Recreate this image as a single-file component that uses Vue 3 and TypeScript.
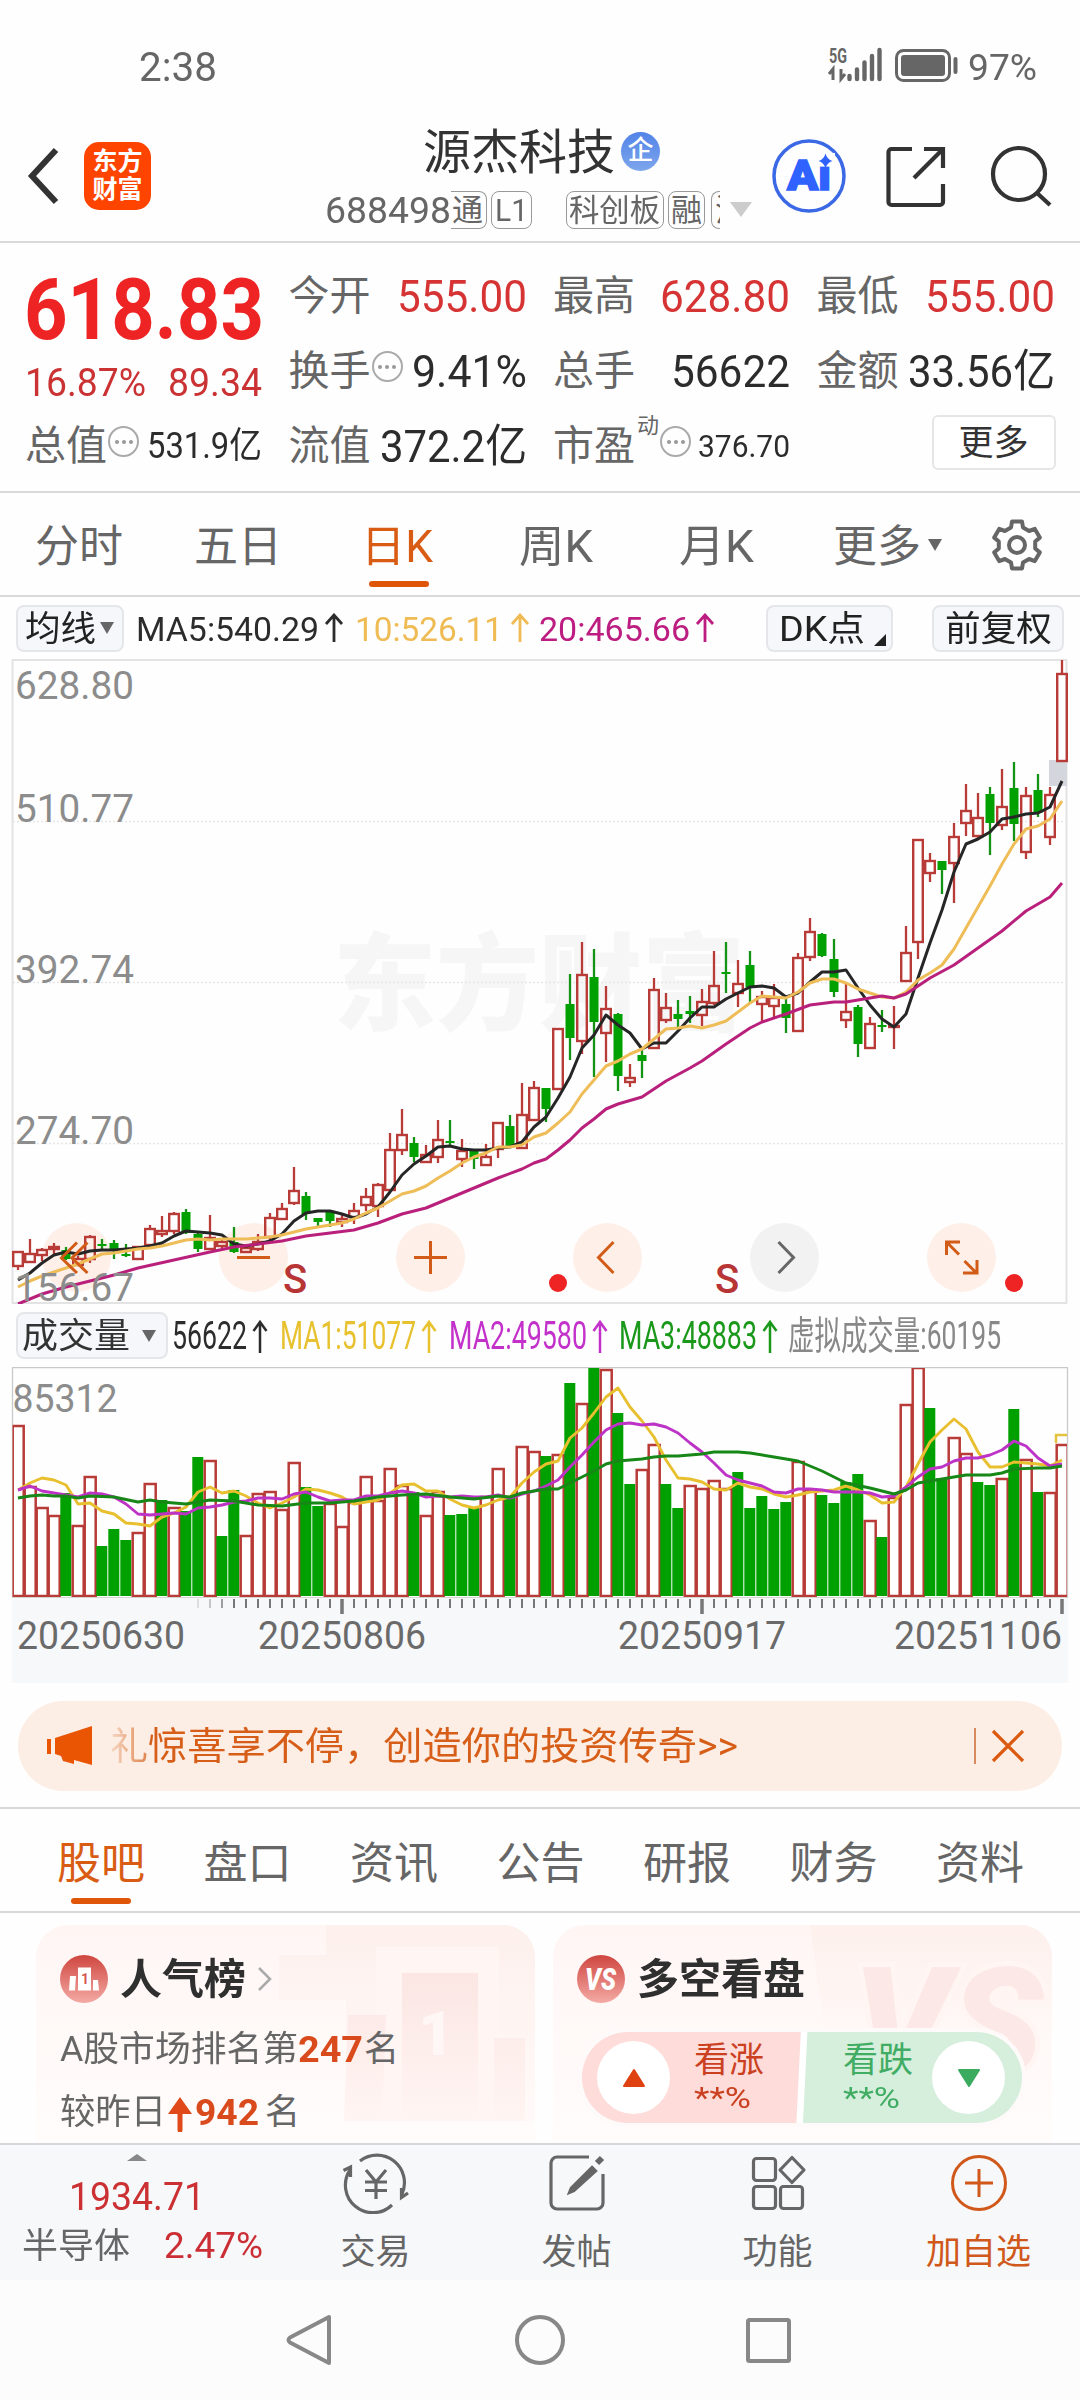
<script setup lang="ts">
import type { Directive } from 'vue'

// Condenses or widens a label so that it takes up exactly the given width.
const fitText = (el: HTMLElement, width: number) => {
  el.style.transform = ''
  el.style.marginRight = '0px'
  const natural = el.getBoundingClientRect().width
  if (!natural) return
  el.style.transformOrigin = 'left center'
  el.style.transform = `scaleX(${width / natural})`
  el.style.marginRight = `${width - natural}px`
}
const vFit: Directive<HTMLElement, number> = {
  mounted: (el, b) => fitText(el, b.value),
  updated: (el, b) => fitText(el, b.value),
}

type Candle = [up: 0 | 1, top: number, bottom: number, high: number, low: number]

const candles: Candle[] = [
  [1, 592, 606, 592, 610], [1, 594, 602, 579, 602], [1, 590, 595, 588, 601], [1, 587, 589, 583, 594],
  [0, 590, 599, 587, 600], [1, 599, 605, 596, 605], [1, 577, 599, 575, 603], [0, 584, 585, 579, 589],
  [0, 583, 589, 580, 599], [0, 594, 595, 584, 597], [1, 587, 599, 586, 599], [1, 569, 585, 565, 586],
  [1, 571, 574, 556, 577], [1, 554, 571, 552, 574], [0, 552, 573, 549, 574], [0, 574, 589, 573, 592],
  [1, 578, 589, 555, 589], [1, 582, 586, 578, 588], [0, 582, 592, 567, 593], [1, 588, 592, 587, 593],
  [1, 582, 589, 574, 591], [1, 558, 577, 553, 580], [1, 549, 559, 543, 560], [1, 531, 543, 507, 545],
  [0, 536, 554, 532, 560], [0, 558, 562, 558, 566], [0, 552, 561, 550, 567], [1, 559, 562, 555, 567],
  [1, 551, 557, 543, 564], [1, 537, 545, 528, 551], [1, 525, 546, 523, 557], [1, 490, 530, 473, 530],
  [1, 475, 490, 449, 495], [0, 483, 497, 477, 502], [1, 495, 502, 485, 502], [1, 480, 497, 460, 503],
  [0, 481, 483, 460, 486], [1, 491, 499, 479, 507], [0, 489, 499, 489, 509], [1, 497, 505, 484, 506],
  [1, 463, 489, 463, 498], [0, 466, 487, 455, 487], [1, 455, 488, 423, 488], [1, 428, 460, 421, 460],
  [0, 428, 449, 428, 462], [1, 369, 429, 369, 430], [0, 344, 378, 314, 400], [1, 315, 381, 282, 394],
  [0, 317, 362, 289, 417], [1, 349, 373, 326, 402], [0, 354, 416, 353, 431], [1, 418, 422, 404, 427],
  [0, 395, 401, 390, 418], [1, 330, 388, 318, 389], [1, 348, 360, 333, 363], [0, 354, 359, 340, 367],
  [0, 351, 354, 336, 363], [1, 342, 355, 329, 366], [1, 326, 343, 291, 345], [0, 312, 314, 282, 333],
  [1, 324, 333, 300, 347], [0, 305, 327, 291, 344], [1, 337, 344, 331, 361], [1, 338, 346, 324, 358],
  [0, 344, 358, 337, 373], [1, 298, 371, 293, 371], [1, 272, 297, 258, 301], [0, 274, 296, 273, 297],
  [0, 299, 332, 279, 337], [1, 352, 360, 323, 368], [0, 347, 384, 345, 397], [1, 364, 388, 357, 388],
  [0, 365, 366, 350, 372], [1, 366, 367, 346, 389], [1, 293, 321, 266, 321], [1, 180, 282, 180, 299],
  [1, 201, 213, 193, 222], [0, 201, 210, 201, 234], [1, 177, 203, 163, 243], [1, 151, 163, 124, 176],
  [1, 158, 176, 133, 178], [0, 134, 163, 127, 195], [1, 147, 165, 109, 170], [0, 128, 164, 102, 181],
  [1, 136, 192, 127, 199], [0, 130, 153, 114, 157], [1, 135, 177, 127, 185], [1, 14, 101, 0, 101],
]

const ma5 = [620, 613, 603, 595, 592, 594, 591, 590, 590, 589, 588, 586, 583, 576, 571, 572, 573, 575, 584, 586, 584, 581,
  574, 561, 553, 551, 551, 554, 558, 554, 547, 532, 515, 504, 496, 487, 486, 489, 490, 490, 488, 487, 482, 467, 457, 438,
  417, 388, 375, 355, 365, 373, 389, 383, 383, 371, 358, 347, 347, 339, 333, 327, 326, 328, 337, 333, 322, 312, 312, 310,
  328, 345, 359, 367, 354, 318, 283, 250, 212, 184, 179, 172, 159, 157, 154, 153, 147, 121]
const ma10 = [627, 621, 616, 612, 608, 604, 599, 594, 593, 591, 589, 588, 586, 583, 580, 579, 580, 579, 579, 579, 578, 577,
  575, 572, 569, 567, 565, 563, 559, 553, 548, 541, 534, 531, 526, 518, 511, 503, 497, 493, 487, 487, 485, 477, 473, 463,
  452, 434, 420, 406, 401, 394, 389, 379, 369, 368, 366, 368, 365, 361, 352, 343, 336, 337, 338, 332, 323, 319, 319, 323,
  329, 333, 337, 338, 332, 320, 313, 305, 289, 268, 247, 226, 204, 184, 169, 166, 159, 141]
const ma20: [number, number][] = [[0, 644], [2, 634], [4, 627], [8, 615], [10, 608], [13, 600], [16, 592], [18, 587], [20, 584],
  [22, 581], [24, 576], [26, 573], [28, 570], [30, 563], [32, 554], [34, 548], [36, 538], [38, 528], [40, 518], [42, 509],
  [43, 503], [44, 499], [45, 490], [46, 480], [47, 468], [48, 459], [49, 449], [50, 444], [52, 437], [54, 421], [56, 408],
  [57, 401], [59, 384], [61, 368], [62, 362], [64, 354], [66, 345], [68, 342], [69, 342], [70, 340], [72, 336], [73, 338],
  [74, 334], [76, 318], [78, 305], [80, 288], [82, 271], [84, 251], [86, 237], [87, 223]]

const volTops = [57, 118, 139, 147, 125, 157, 108, 178, 161, 172, 164, 115, 132, 139, 143, 89, 92, 168, 122, 167, 125, 123,
  141, 94, 119, 138, 135, 158, 134, 108, 132, 100, 117, 124, 147, 123, 147, 146, 139, 128, 100, 128, 78, 83, 88, 86, 15,
  35, 0, 1, 45, 116, 101, 76, 116, 140, 117, 120, 112, 120, 104, 140, 128, 141, 134, 93, 121, 127, 135, 114, 106, 152,
  169, 129, 36, -1, 40, 110, 69, 85, 114, 117, 110, 41, 91, 124, 124, 76]
const volDown = new Set([4, 7, 8, 9, 12, 14, 15, 17, 18, 24, 25, 33, 36, 37, 38, 41, 44, 46, 48, 50, 51, 54, 55, 60, 61, 62,
  63, 64, 67, 68, 69, 70, 72, 76, 77, 80, 81, 83, 85])
const volMa1 = [122, 115, 110, 112, 117, 136, 135, 143, 146, 155, 156, 158, 149, 145, 139, 124, 119, 125, 123, 128, 135, 140,
  135, 129, 121, 122, 125, 129, 136, 134, 132, 125, 117, 116, 123, 123, 131, 137, 140, 137, 132, 129, 115, 104, 96, 93,
  70, 60, 45, 29, 20, 39, 53, 69, 92, 110, 111, 114, 121, 122, 115, 119, 121, 126, 129, 127, 124, 123, 122, 118, 122,
  127, 135, 134, 119, 96, 74, 62, 51, 61, 84, 99, 99, 94, 95, 96, 98, 92]
const volMa2 = [122, 118, 123, 125, 127, 129, 125, 126, 129, 136, 146, 147, 146, 145, 146, 140, 139, 137, 134, 133, 130, 130,
  131, 126, 124, 129, 133, 132, 132, 128, 128, 125, 123, 125, 129, 128, 129, 128, 129, 129, 127, 130, 126, 123, 118, 112,
  99, 87, 74, 62, 56, 55, 57, 56, 59, 65, 75, 84, 95, 107, 112, 115, 118, 124, 125, 121, 121, 122, 124, 124, 124, 125,
  129, 128, 119, 109, 101, 99, 93, 90, 90, 87, 82, 73, 78, 90, 98, 96]
const volMa3: [number, number][] = [[0, 130], [1, 128], [2, 127], [3, 128], [4, 128], [5, 130], [6, 128], [8, 129], [10, 134],
  [11, 132], [12, 134], [14, 136], [16, 132], [18, 133], [20, 137], [22, 138], [24, 135], [26, 135], [28, 133], [30, 129],
  [32, 127], [34, 126], [36, 129], [38, 131], [40, 128], [41, 129], [42, 125], [44, 121], [45, 121], [46, 115], [47, 109],
  [48, 103], [49, 96], [50, 93], [51, 92], [52, 91], [53, 89], [54, 88], [55, 88], [57, 86], [58, 84], [60, 84], [61, 85],
  [63, 89], [65, 93], [67, 103], [69, 115], [71, 120], [73, 126], [74, 122], [75, 115], [77, 111], [79, 107], [81, 107],
  [82, 105], [83, 101], [85, 100], [86, 100], [87, 98]]

const cx = (i: number) => 18 + 12 * i
const line = (ys: number[]) => ys.map((y, i) => `${cx(i)},${y}`).join(' ')
const sparse = (ps: [number, number][]) => ps.map(([i, y]) => `${cx(i)},${y}`).join(' ')

const ticks = Array.from({ length: 73 }, (_, k) => k + 15).map((i) => ({
  x: cx(i),
  major: (i - 27) % 30 === 0,
  opacity: i === 15 ? 0.2 : i === 16 ? 0.4 : i === 17 ? 0.7 : 1,
}))

const priceLabels = [
  { y: 39, t: '628.80' }, { y: 162, t: '510.77' }, { y: 323, t: '392.74' }, { y: 484, t: '274.70' }, { y: 641, t: '156.67' },
]
const dates = [
  { x: 17, t: '20250630' }, { x: 258, t: '20250806' }, { x: 618, t: '20250917' }, { x: 894, t: '20251106' },
]

const polar = (r: number, deg: number) =>
  `${(27 + r * Math.cos((deg * Math.PI) / 180)).toFixed(1)} ${(27 + r * Math.sin((deg * Math.PI) / 180)).toFixed(1)}`
const gear =
  'M' + [0, 1, 2, 3, 4, 5].map((k) => {
    const a = -90 + 60 * k
    return [polar(24, a - 12), polar(24, a + 12), polar(18.5, a + 19), polar(18.5, a + 41)].join('L')
  }).join('L') + 'Z'

const infoTabs = ['股吧', '盘口', '资讯', '公告', '研报', '财务', '资料']
</script>

<template>
  <div class="screen">
    <div class="status">
      <span v-fit="78" class="clock">2:38</span>
      <svg class="signal" width="134" height="46" viewBox="824 43 134 46">
        <text x="829" y="63" font-size="20" font-weight="700" textLength="18" lengthAdjust="spacingAndGlyphs" fill="#666">5G</text>
        <path d="M833 80V69l-4 5M841 69v10l4-5" fill="none" stroke="#666" stroke-width="3" />
        <path d="M849.500 76v3M857 69.500v9.500M864.500 62.500v16.500M872 56v23M879.500 50v29" stroke="#666" stroke-width="4.400" stroke-linecap="round" />
        <rect x="896.500" y="50.500" width="53" height="30" rx="7" fill="none" stroke="#666" stroke-width="3" />
        <rect x="901" y="55" width="44" height="21" rx="3" fill="#666" />
        <path d="M955.500 59v13" stroke="#666" stroke-width="4" stroke-linecap="round" />
      </svg>
      <span v-fit="69" class="percent">97%</span>
    </div>

    <header class="head">
      <svg class="back" width="34" height="60" viewBox="0 0 34 60"><path d="M30 4L6 30l24 26" fill="none" stroke="#333" stroke-width="6" /></svg>
      <div class="logo"><span>东方</span><span>财富</span></div>
      <div class="center">
        <div class="title"><span v-fit="192">源杰科技</span><i class="ent">企</i></div>
        <div class="code">
          <span v-fit="126" class="num">688498</span>
          <b class="tag open"><span v-fit="31">通</span></b><b class="tag l1"><span v-fit="33">L1</span></b>
          <b class="tag wide"><span v-fit="91">科创板</span></b><b class="tag rong"><span v-fit="31">融</span></b>
          <b class="tag cut">沪</b><i class="down"></i>
        </div>
      </div>
      <svg class="ai" width="74" height="76" viewBox="0 0 74 76">
        <circle cx="37" cy="38" r="35" fill="none" stroke="#3b68e4" stroke-width="3.500" />
        <text x="15" y="52" font-size="42" font-weight="900" fill="#2f62ff" stroke="#2f62ff" stroke-width="1.500" textLength="44" lengthAdjust="spacingAndGlyphs">Ai</text>
        <rect x="46" y="15" width="17" height="13.500" fill="#fff" />
        <path d="M53.500 15.500q1.500 6 7 7.500q-5.500 1.500-7 7.500q-1.500-6-7-7.500q5.500-1.500 7-7.500z" fill="#2f62ff" />
      </svg>
      <svg class="share" width="64" height="64" viewBox="0 0 64 64" fill="none" stroke="#333" stroke-width="4.200">
        <path d="M28 5H7.500a3 3 0 0 0-3 3v50a3 3 0 0 0 3 3H56a3 3 0 0 0 3-3V40" /><path d="M40 5h19v19M59 5L30 34" />
      </svg>
      <svg class="search" width="64" height="64" viewBox="0 0 64 64" fill="none" stroke="#333" stroke-width="4.200">
        <circle cx="30" cy="30" r="26" /><path d="M48 49l13 12" />
      </svg>
    </header>

    <section class="quote">
      <div class="price">
        <span v-fit="240" class="last">618.83</span>
        <div class="chg"><span v-fit="121">16.87%</span><span v-fit="94">89.34</span></div>
      </div>
      <div class="cell"><label>今开</label><span v-fit="130" class="v up">555.00</span></div>
      <div class="cell"><label>最高</label><span v-fit="130" class="v up">628.80</span></div>
      <div class="cell"><label>最低</label><span v-fit="130" class="v up">555.00</span></div>
      <div class="cell"><label>换手</label><i class="info"></i><span v-fit="115" class="v">9.41%</span></div>
      <div class="cell"><label>总手</label><span v-fit="119" class="v">56622</span></div>
      <div class="cell"><label>金额</label><span v-fit="147" class="v">33.56亿</span></div>
      <div class="cell"><label>总值</label><i class="info"></i><span v-fit="115" class="v mid">531.9亿</span></div>
      <div class="cell"><label>流值</label><span v-fit="147" class="v">372.2亿</span></div>
      <div class="cell"><label>市盈</label><sup>动</sup><i class="info pe"></i><span v-fit="92" class="v sm">376.70</span></div>
      <div class="cell last-cell"><button class="more">更多</button></div>
    </section>

    <nav class="periods">
      <span class="p1">分时</span><span class="p2">五日</span><span class="p3 on"><em v-fit="72">日K</em></span>
      <span class="p4"><em v-fit="74">周K</em></span><span class="p5"><em v-fit="75">月K</em></span><span class="p6">更多</span>
      <i class="tri p7"></i>
      <svg class="gear" width="54" height="54" viewBox="0 0 54 54" fill="none" stroke="#666" stroke-width="4" stroke-linejoin="round">
        <path :d="gear" /><circle cx="27" cy="27" r="8" />
      </svg>
    </nav>

    <section class="mas">
      <button class="chip c1"><span v-fit="71">均线</span><i class="tri"></i></button>
      <span v-fit="183" class="m5">MA5:540.29</span><svg class="ar a5" width="20" height="30" viewBox="0 0 20 30"><path d="M10 29V3M2 11l8-9 8 9" /></svg>
      <span v-fit="148" class="m10">10:526.11</span><svg class="ar a10" width="20" height="30" viewBox="0 0 20 30"><path d="M10 29V3M2 11l8-9 8 9" /></svg>
      <span v-fit="151" class="m20">20:465.66</span><svg class="ar a20" width="20" height="30" viewBox="0 0 20 30"><path d="M10 29V3M2 11l8-9 8 9" /></svg>
      <button class="chip c2"><span v-fit="86">DK点</span><i class="corner"></i></button>
      <button class="chip c3"><span v-fit="107">前复权</span></button>
    </section>

    <svg class="kline" width="1080" height="645" viewBox="0 -1 1080 645">
      <text x="333" y="362" class="mark" textLength="412" lengthAdjust="spacingAndGlyphs">东方财富</text>
      <rect x="12.500" y="0" width="1054" height="643" fill="none" stroke="#e3e3e3" stroke-width="2" />
      <g stroke="#e6e6e6" stroke-width="1.500" stroke-dasharray="2 2"><path d="M13 161.500H1067M13 322.500H1067M13 483.500H1067" /></g>
      <g fill="#fef0e9">
        <circle cx="76.500" cy="597.500" r="34.500" /><circle cx="253.500" cy="597.500" r="34.500" /><circle cx="430.500" cy="597.500" r="34.500" />
        <circle cx="607.500" cy="597.500" r="34.500" /><circle cx="784.500" cy="597.500" r="34.500" fill="#f2f2f2" /><circle cx="961.500" cy="597.500" r="34.500" />
      </g>
      <rect x="1049" y="100" width="18" height="26" fill="#d3d6dc" />
      <g v-for="(c, i) in candles" :key="i">
        <template v-if="c[0]">
          <path :d="`M${cx(i)} ${c[3]}V${c[1]}M${cx(i)} ${c[2]}V${c[4]}`" stroke="#b83b38" stroke-width="2.300" />
          <rect :x="cx(i) - 4.800" :y="c[1]" width="9.600" :height="c[2] - c[1]" fill="none" stroke="#b83b38" stroke-width="2.400" />
        </template>
        <template v-else>
          <path :d="`M${cx(i)} ${c[3]}V${c[4]}`" stroke="#159315" stroke-width="2.300" />
          <rect :x="cx(i) - 4.500" :y="c[1]" width="9" :height="Math.max(2, c[2] - c[1])" fill="#00a000" />
        </template>
      </g>
      <g fill="none" stroke-width="3" stroke-linejoin="round">
        <polyline :points="line(ma5)" stroke="#262626" /><polyline :points="line(ma10)" stroke="#efbd58" />
        <polyline :points="sparse(ma20)" stroke="#b9207c" />
      </g>
      <text v-for="p in priceLabels" :key="p.t" x="15" :y="p.y" class="axis" textLength="119" lengthAdjust="spacingAndGlyphs">{{ p.t }}</text>
      <g fill="none" stroke="#d25c17" stroke-width="3">
        <path d="M77 582.500L61.500 598 77 613M87.500 582.500L72 598l15.500 15" /><path d="M237 597.500h33" />
        <path d="M414 597.500h33M430.500 581v33" /><path d="M613.500 582l-15 15.500 15 15.500" />
        <path d="M778.500 582l15 15.500-15 15.500" stroke="#666" />
        <path d="M959 594.500l-12-12M946.500 595v-13h13.500M964.500 601l12 12M977 600v13h-14" />
      </g>
      <g class="sell"><text x="283" y="633">S</text><text x="715" y="633">S</text></g>
      <circle cx="558" cy="623" r="9" fill="#ee2424" /><circle cx="1014" cy="623" r="9" fill="#ee2424" />
    </svg>

    <section class="vols">
      <button class="chip cv"><span v-fit="108">成交量</span><i class="tri"></i></button>
      <span v-fit="75" class="w0">56622</span><svg class="ar b0" width="16" height="34" viewBox="0 0 16 34"><path d="M8 34V3M1.500 12L8 3l6.500 9" /></svg>
      <span v-fit="136" class="w1">MA1:51077</span><svg class="ar b1" width="16" height="34" viewBox="0 0 16 34"><path d="M8 34V3M1.500 12L8 3l6.500 9" /></svg>
      <span v-fit="138" class="w2">MA2:49580</span><svg class="ar b2" width="16" height="34" viewBox="0 0 16 34"><path d="M8 34V3M1.500 12L8 3l6.500 9" /></svg>
      <span v-fit="138" class="w3">MA3:48883</span><svg class="ar b3" width="16" height="34" viewBox="0 0 16 34"><path d="M8 34V3M1.500 12L8 3l6.500 9" /></svg>
      <span v-fit="213" class="w4">虚拟成交量:60195</span>
    </section>

    <svg class="volume" width="1080" height="316" viewBox="0 -1 1080 316">
      <defs><clipPath id="vol"><rect x="12.500" y="0" width="1054.500" height="229" /></clipPath></defs>
      <rect x="12" y="230" width="1056" height="85" fill="#f7f8fa" />
      <path d="M12.500 230V-.3H1067.500V230" fill="none" stroke="#c9c9c9" stroke-width="1.300" />
      <path d="M12 229.500H1068" stroke="#d5d5d0" stroke-width="1" />
      <g clip-path="url(#vol)">
        <template v-for="(t, i) in volTops" :key="i">
          <rect v-if="volDown.has(i)" :x="cx(i) - 5.700" :y="t" width="11" :height="228 - t" fill="#00a000" />
          <rect v-else :x="cx(i) - 5.300" :y="t + 1" width="11" :height="227 - t" fill="#fff" stroke="#b83b38" stroke-width="2.500" />
        </template>
        <path d="M1056 75V67h12" fill="none" stroke="#e3c23c" stroke-width="2.500" />
        <g fill="none" stroke-width="2.900" stroke-linejoin="round">
          <polyline :points="line(volMa1)" stroke="#e8c02f" /><polyline :points="line(volMa2)" stroke="#bd33c6" />
          <polyline :points="sparse(volMa3)" stroke="#178717" />
        </g>
      </g>
      <text x="12.500" y="43.500" class="axis" textLength="105" lengthAdjust="spacingAndGlyphs">85312</text>
      <path v-for="k in ticks" :key="k.x" :d="`M${k.x} 231v${k.major ? 15 : 9}`" stroke="#777" :stroke-width="k.major ? 3.500 : 2" :stroke-opacity="k.opacity" />
      <text v-for="d in dates" :key="d.t" :x="d.x" y="281" class="axis date" textLength="168" lengthAdjust="spacingAndGlyphs">{{ d.t }}</text>
    </svg>

    <div class="promo">
      <svg class="horn" width="48" height="42" viewBox="0 0 48 42"><path d="M1 14h4v15H1zM9 13L46 1v39l-18-5v4l-11-3-2-5-6-2z" fill="#ea5504" /></svg>
      <span class="fade">礼</span><span v-fit="590" class="msg">惊喜享不停，创造你的投资传奇&gt;&gt;</span>
      <i class="sep"></i>
      <svg class="close" width="34" height="34" viewBox="0 0 34 34"><path d="M2 2l30 30M32 2L2 32" stroke="#dc5a10" stroke-width="3.200" /></svg>
    </div>

    <nav class="infos"><span v-for="(t, i) in infoTabs" :key="t" :class="{ on: i === 0 }">{{ t }}</span></nav>

    <section class="cards">
      <article class="card">
        <svg class="deco" width="499" height="218" viewBox="0 0 499 218">
          <path d="M243 30h47V0h209v196H310V75h-67z" fill="url(#pk)" /><path d="M340 22h123v174H340z" fill="#fff5f2" />
          <path d="M366 48h76v148h-76zM312 90h38l-4 106h-38zM458 113h31v83h-31z" fill="url(#pk2)" />
          <text x="382" y="130" font-size="62" font-weight="900" fill="#fff7f5">1</text>
          <defs>
            <linearGradient id="pk" x2="0" y2="1"><stop stop-color="#fdf0ed" /><stop offset="1" stop-color="#fffaf8" /></linearGradient>
            <linearGradient id="pk2" x2="0" y2="1"><stop stop-color="#fbe6e3" /><stop offset="1" stop-color="#fff5f3" /></linearGradient>
          </defs>
        </svg>
        <h3>
          <svg width="48" height="48" viewBox="0 0 48 48">
            <defs><linearGradient id="ic" x2="0" y2="1"><stop stop-color="#cf4640" /><stop offset="1" stop-color="#f4aaa4" /></linearGradient></defs>
            <circle cx="24" cy="24" r="24" fill="url(#ic)" /><path d="M18 12.500h13v23H18zM10 21h6l-1 14.500H9zM33 25h5l1 10.500h-6z" fill="#fff" />
            <text x="21" y="29" font-size="14" font-weight="700" fill="#d65a54">1</text>
          </svg>
          <span v-fit="126">人气榜</span>
          <svg class="chev" width="16" height="26" viewBox="0 0 16 26"><path d="M2 2l11 11L2 24" fill="none" stroke="#aaa" stroke-width="2.500" /></svg>
        </h3>
        <p><span v-fit="238">A股市场排名第</span><b v-fit="65">247</b><span class="g1">名</span></p>
        <p><span v-fit="106">较昨日</span><svg class="rise" width="26" height="36" viewBox="0 0 26 36"><path d="M13 34V14" stroke="#e04a1a" stroke-width="5" stroke-linecap="round" /><path d="M13 1l12 17H1z" fill="#e04a1a" /></svg><b v-fit="64">942</b><span class="g2">名</span></p>
      </article>
      <article class="card">
        <svg class="deco" width="499" height="218" viewBox="0 0 499 218">
          <path d="M257 0h242v130H275z" fill="url(#pk)" />
          <text x="300" y="150" font-size="152" font-weight="900" font-style="italic" fill="#fce8e6" stroke="#fff5f3" stroke-width="10" paint-order="stroke">VS</text>
        </svg>
        <h3>
          <svg width="48" height="48" viewBox="0 0 48 48"><circle cx="24" cy="24" r="24" fill="url(#ic)" />
            <text x="8" y="35" font-size="31" font-weight="900" font-style="italic" fill="#fff" textLength="31" lengthAdjust="spacingAndGlyphs">VS</text></svg>
          <span v-fit="168">多空看盘</span>
        </h3>
        <div class="duel">
          <div class="side bull"><i><svg width="24" height="20" viewBox="0 0 24 20"><path d="M12 2l10 16H2z" fill="#df4110" stroke="#df4110" stroke-width="2" stroke-linejoin="round" /></svg></i>
            <div><span>看涨</span><em v-fit="57">**%</em></div></div>
          <div class="side bear"><div><span>看跌</span><em v-fit="57">**%</em></div>
            <i><svg width="24" height="20" viewBox="0 0 24 20"><path d="M12 18L2 2h20z" fill="#3bac5f" stroke="#3bac5f" stroke-width="2" stroke-linejoin="round" /></svg></i></div>
        </div>
      </article>
    </section>

    <footer class="bar">
      <div class="sector">
        <i class="up-tri"></i>
        <span v-fit="136" class="idx">1934.71</span>
        <div><span v-fit="108">半导体</span><b v-fit="99">2.47%</b></div>
      </div>
      <div class="item i1">
        <svg width="68" height="62" viewBox="0 0 68 62" fill="none" stroke="#666" stroke-width="3.200">
          <path d="M18 9A27.500 27.500 0 0 1 60 42M50 53A27.500 27.500 0 0 1 8 18" /><path d="M1.500 18.500l7-3.500V25M66 41l-6.500 4.500V36" />
          <path d="M24 18l10 12 10-12M34 30v17M23 30h22M23 38.500h22" />
        </svg><span>交易</span>
      </div>
      <div class="item i2">
        <svg width="68" height="62" viewBox="0 0 68 62" fill="none" stroke="#666" stroke-width="3.200">
          <path d="M46 5H14a6 6 0 0 0-6 6v40a6 6 0 0 0 6 6h40a6 6 0 0 0 6-6V22" />
          <path d="M49 15l4 4-22 20-5 2 2-5z" fill="#666" stroke-width="2.500" /><path d="M54 11l5-5" stroke-width="6" />
        </svg><span>发帖</span>
      </div>
      <div class="item i3">
        <svg width="68" height="62" viewBox="0 0 68 62" fill="none" stroke="#666" stroke-width="3.200">
          <rect x="9.500" y="6.500" width="22" height="22" rx="3" /><rect x="9.500" y="34.500" width="22" height="22" rx="3" /><rect x="36.500" y="34.500" width="22" height="22" rx="3" />
          <path d="M48 5.500L60 18 48 30.500 36 18z" stroke-linejoin="round" />
        </svg><span>功能</span>
      </div>
      <div class="item i4">
        <svg width="68" height="62" viewBox="0 0 68 62" fill="none" stroke="#d0581a" stroke-width="3"><circle cx="34" cy="31" r="26.500" /><path d="M20 31h28M34 17v28" /></svg>
        <span>加自选</span>
      </div>
    </footer>

    <div class="sys">
      <svg width="50" height="60" viewBox="0 0 50 60"><path d="M45 7v46L6 32.500q-3-2.500 0-5z" fill="none" stroke="#888" stroke-width="4" stroke-linejoin="round" /></svg>
      <svg width="54" height="54" viewBox="0 0 54 54"><circle cx="27" cy="27" r="23" fill="none" stroke="#888" stroke-width="4" /></svg>
      <svg width="50" height="50" viewBox="0 0 50 50"><rect x="5" y="5" width="41" height="41" rx="1.500" fill="none" stroke="#888" stroke-width="4" /></svg>
    </div>
  </div>
</template>

<style>
body { margin: 0; background: #fefefe; }
</style>

<style scoped>
.screen {
  width: 1080px; height: 2400px; overflow: hidden; background: #fefefe; color: #333;
  font-family: Roboto, "Noto Sans CJK SC", sans-serif; line-height: 1; white-space: nowrap;
}
.screen * { box-sizing: border-box; }
.screen span, .screen em, .screen b { display: inline-block; flex: none; }
.screen svg { flex: none; display: block; }
em, i { font-style: normal; }
button { font: inherit; color: inherit; padding: 0; }

.status { height: 110px; padding: 25px 0 0 139px; display: flex; align-items: center; color: #666; }
.clock { font-size: 41px; }
.signal { margin-left: 607px; margin-top: -3px; }
.percent { font-size: 37.500px; margin-left: 10px; }

.head { height: 133px; display: flex; align-items: center; border-bottom: 2px solid #d9d9d9; padding-left: 26px; }
.logo { margin-left: 24px; width: 67px; height: 68px; border-radius: 15px; background: #ff4400; color: #fff; font-weight: 700; font-size: 25px; line-height: 28px; padding-top: 6px; text-align: center; }
.logo span { display: block; }
.center { margin: 3px 0 0 174px; width: 430px; }
.title { height: 52px; padding: 3px 0 0 98px; display: flex; align-items: center; font-size: 48px; }
.ent { width: 39px; height: 39px; margin: -3px 0 0 6px; border-radius: 50%; background: linear-gradient(#5284e8, #7ea6ec); color: #fff; font-size: 26px; line-height: 37px; text-align: center; font-weight: 500; }
.code { height: 38px; margin-top: 13px; display: flex; align-items: center; color: #666; font-size: 37px; }
.num { position: relative; top: 1px; }
.tag { height: 38px; border: 1.5px solid #999; border-radius: 8px; font-size: 31px; font-weight: 400; line-height: 37px; overflow: hidden; }
.tag.open { width: 36px; border-left: 0; border-radius: 0 8px 8px 0; margin-left: 0; padding-left: 1px; }
.tag.l1 { width: 41px; margin-left: 4px; padding-left: 3px; }
.tag.wide { width: 98px; margin-left: 34px; padding-left: 2px; }
.tag.rong { width: 37px; margin-left: 4px; padding-left: 2px; }
.tag.cut { width: 9px; margin-left: 6px; border-right: 0; border-radius: 8px 0 0 8px; padding-left: 3px; }
.down { margin-left: 10px; border: 11.5px solid transparent; border-bottom: 0; border-top: 15px solid #ccc; }
.ai { margin-left: 17px; }
.share { margin-left: 38px; }
.search { margin-left: 41px; }

.quote { height: 250px; padding: 15.500px 0 0 25px; border-bottom: 2px solid #d9d9d9; display: grid; grid-template-columns: 237px 238px 237px 238px; column-gap: 26.500px; grid-template-rows: 75px 75px 75px; }
.price { grid-row: span 2; padding-top: 9px; }
.last { font-size: 85px; font-weight: 700; color: #ee2424; }
.price .last { margin-left: -1px; }
.chg { display: flex; justify-content: space-between; margin-top: 11px; font-size: 38px; color: #cb3233; }
.cell { display: flex; align-items: center; position: relative; }
.cell label { font-size: 41px; color: #666; }
.v { font-size: 45px; color: #2c2c2c; margin-left: auto; }
.v.up { color: #d63434; }
.v.mid { font-size: 36px; }
.v.sm { font-size: 32px; }
.info { width: 31px; height: 31px; border: 2px solid #aaa; border-radius: 50%; margin: -9px 0 0 1px; display: flex; align-items: center; justify-content: center; }
.info::after { content: ""; width: 4px; height: 4px; border-radius: 50%; background: #999; box-shadow: -7px 0 #999, 7px 0 #999; }
sup { font-size: 22px; color: #666; align-self: flex-start; margin: 6px 0 0 2px; line-height: 1; }
.last-cell { justify-content: flex-end; }
.more { width: 124px; height: 55px; border: 2px solid #e6e6e6; border-radius: 6px; background: #fff; font-size: 35px; margin: -8px -1px 0 0; padding-top: 2px; }

.periods { height: 104px; padding: 6px 0 0 35px; display: flex; align-items: center; border-bottom: 2px solid #d9d9d9; font-size: 44px; color: #666; }
.p2 { margin-left: 71px; }
.p3 { margin-left: 79px; }
.p4 { margin-left: 86px; }
.p5 { margin-left: 86px; }
.p6 { margin-left: 79px; }
.on { color: #d95c14; position: relative; }
.on::after { content: ""; position: absolute; width: 60px; height: 6px; border-radius: 3px; background: #e05609; left: 50%; margin-left: -30px; top: 56px; }
.p3::after { margin-left: -28px; }
.tri { border: 7.500px solid transparent; border-bottom: 0; border-top: 12px solid #666; }
.p7 { margin: -5px 0 0 7px; }
.gear { margin: -5px 0 0 48px; }

.mas { height: 62px; padding-left: 16px; display: flex; align-items: center; font-size: 34px; color: #2c2c2c; }
.mas > span { position: relative; top: 1px; }
.chip { height: 47px; background: #f6f7fa; border: 2px solid #e4e6ea; border-radius: 8px; display: flex; align-items: center; font-size: 35px; color: #222; flex: none; }
.chip span { position: relative; top: 1px; }
.c1 { width: 108px; padding-left: 7px; }
.c1 .tri { margin-left: 4px; }
.m5 { margin-left: 12px; }
.ar { fill: none; stroke: currentColor; stroke-width: 2.800; margin-left: 5px; }
.m10, .a10 { color: #efbb55; }
.m20, .a20 { color: #bd1c80; }
.m10 { margin-left: 11px; }
.a10 { margin-left: 7px; }
.m20 { margin-left: 9px; }
.c2 { width: 127px; margin-left: 51px; padding-left: 11px; }
.corner { align-self: flex-end; margin: 0 0 4px 9px; border-left: 12px solid transparent; border-bottom: 12px solid #222; }
.c3 { width: 132px; margin-left: 39px; padding-left: 11px; }

.mark { font: 900 106px "Noto Sans CJK SC", sans-serif; fill: #f6f6f6; }
.axis { font-size: 39px; fill: #8c8c8c; }
.date { font-size: 38px; fill: #6a6a6a; }
.sell { font-size: 40px; font-weight: 500; fill: #b83535; }

.vols { height: 63px; padding-left: 16px; display: flex; align-items: center; font-size: 39px; }
.vols > span { position: relative; top: 1px; }
.cv { width: 152px; padding-left: 4px; color: #333; }
.cv .tri { margin-left: 12px; }
.w0 { margin-left: 4px; }
.w0, .b0 { color: #2c2c2c; }
.w1, .b1 { color: #e8c12f; }
.w2, .b2 { color: #c331cb; }
.w3, .b3 { color: #1a981a; }
.w1, .w2, .w3 { margin-left: 12px; }
.vols .ar { margin-left: 5px; stroke-width: 2.500; }
.vols .w3 { margin-left: 11px; }
.w4 { color: #888; margin-left: 10px; }

.promo { margin: 18px 18px 16px; height: 90px; border-radius: 45px; background: #fceee4; display: flex; align-items: center; padding-left: 28px; font-size: 38px; color: #d75e18; }
.fade { margin-left: 16px; -webkit-mask-image: linear-gradient(90deg, rgba(0, 0, 0, .15), rgba(0, 0, 0, .75)); mask-image: linear-gradient(90deg, rgba(0, 0, 0, .15), rgba(0, 0, 0, .75)); }
.sep { margin-left: 236px; width: 2px; height: 36px; background: #d98a5c; }
.close { margin-left: 15px; }

.infos { height: 106px; border-top: 2px solid #d9d9d9; border-bottom: 2px solid #d9d9d9; padding: 7px 0 0 57px; display: flex; align-items: center; gap: 58.500px; font-size: 44px; color: #666; }

.cards { height: 230px; padding: 12px 0 0 36px; display: flex; gap: 18px; }
.card { width: 499px; height: 218px; border-radius: 32px 32px 0 0; background: linear-gradient(#fff6f4, #fffcfb); position: relative; overflow: hidden; padding-left: 24px; flex: none; }
.deco { position: absolute; left: 0; top: 0; }
.card h3, .card p, .duel { position: relative; margin: 0; }
.card h3 { display: flex; align-items: center; padding-top: 30px; font-size: 42px; font-weight: 700; color: #2f2f2f; }
.card h3 > span { margin-left: 12px; padding-top: 2px; }
.chev { margin-left: 11px; }
.card p { display: flex; align-items: center; height: 63px; margin-top: 15px; font-size: 35px; color: #666; }
.card p + p { margin-top: 0; }
.card b { font-size: 37px; font-weight: 700; color: #d94a1c; margin-left: 0; }
.g1 { margin-left: 1px; }
.g2 { margin-left: 6px; }
.card .rise + b { margin-left: 2px; }
.rise { margin: 2px 0 0 1px; }
.duel { display: flex; width: 448px; height: 99px; border: 4px solid #fffafa; border-radius: 50px; overflow: hidden; background: #fff; margin: 25px 0 0 1px; }
.side { display: flex; align-items: center; width: 221px; flex: none; }
.bull { background: #fddcd9; clip-path: polygon(0 0, 99% 0, 97% 100%, 0 100%); color: #cb4020; padding-left: 15px; gap: 24px; }
.bear { background: #d6eedc; clip-path: polygon(2% 0, 100% 0, 100% 100%, 0 100%); color: #41ad64; padding-left: 40px; gap: 19px; }
.side i { width: 73px; height: 73px; border-radius: 50%; background: #fff; display: flex; align-items: center; justify-content: center; flex: none; }
.side span, .side em { display: block; width: max-content; }
.side span { font-size: 35px; }
.side em { font-size: 30px; margin-top: 5px; }

.bar { height: 137px; border-top: 2px solid #d5d7da; background: #f7f8fa; display: flex; color: #666; font-size: 35px; }
.sector { width: 275px; padding-left: 22px; }
.up-tri { display: block; margin: 9px 0 0 105px; width: 0; border: 10.500px solid transparent; border-top: 0; border-bottom: 7px solid #888; }
.idx { font-size: 39px; color: #cb3033; margin: 17px 0 0 47px; display: block !important; width: max-content; }
.sector div { display: flex; align-items: center; margin-top: 10px; }
.sector div span { padding-top: 1px; }
.sector b { font-weight: 400; color: #cb2e35; font-size: 37px; margin-left: 34px; }
.item { width: 201px; display: flex; flex-direction: column; align-items: center; padding-top: 7px; }
.item span { margin-top: 21px; }
.i4 { color: #d0581a; }

.sys { height: 120px; background: #fcfcfc; display: flex; align-items: center; padding-left: 284px; }
.sys svg + svg { margin-left: 179px; }
.sys svg:last-child { margin-left: 176px; }
</style>
